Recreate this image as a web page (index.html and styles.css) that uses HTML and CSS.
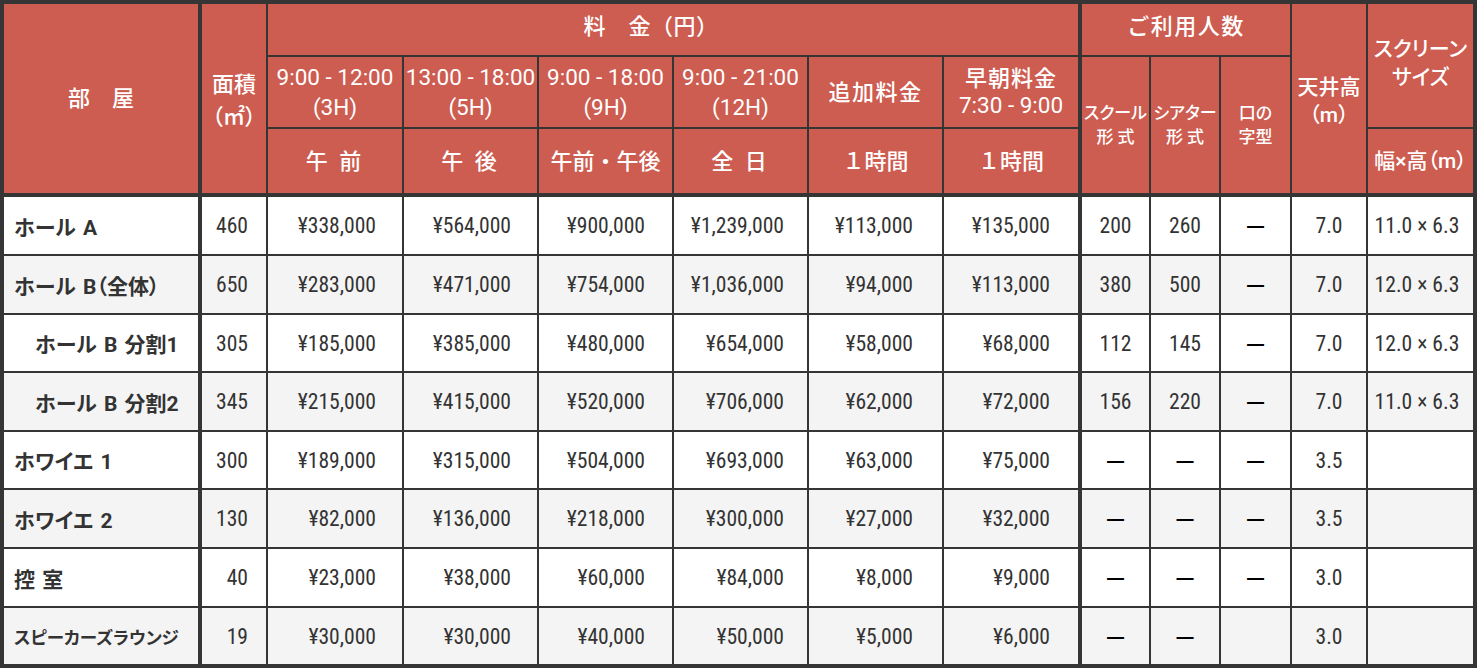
FILE: index.html
```html
<!DOCTYPE html>
<html lang="ja">
<head>
<meta charset="utf-8">
<title>料金表</title>
<link rel="stylesheet" href="styles.css">
</head>
<body>
<div class="fee" role="table">
  <div class="thead" role="rowgroup">
    <div class="th rs3 tr hb" role="columnheader">部　屋</div>
    <div class="th rs3 hb area-h pp" role="columnheader"><span>面積<br>（㎡）</span></div>
    <div class="th cs6 tr top fee-h" role="columnheader">料　金（円）</div>
    <div class="th cs3 top ls" role="columnheader">ご利用人数</div>
    <div class="th rs3 hb ceil-h pp" role="columnheader"><span>天井高<br>（m）</span></div>
    <div class="th rs2 nr screen-h pp" role="columnheader"><span>スクリーン<br>サイズ</span></div>

    <div class="th time" role="columnheader"><span>9:00 - 12:00<br>(3H)</span></div>
    <div class="th time" role="columnheader"><span>13:00 - 18:00<br>(5H)</span></div>
    <div class="th time" role="columnheader"><span>9:00 - 18:00<br>(9H)</span></div>
    <div class="th time" role="columnheader"><span>9:00 - 21:00<br>(12H)</span></div>
    <div class="th ls" role="columnheader">追加料金</div>
    <div class="th tr early" role="columnheader"><span><b class="jp">早朝料金</b><br>7:30 - 9:00</span></div>
    <div class="th rs2 hb cap pp" role="columnheader"><span>スクール<br>形 式</span></div>
    <div class="th rs2 hb cap pp" role="columnheader"><span>シアター<br>形 式</span></div>
    <div class="th rs2 hb cap pp" role="columnheader"><span>口の<br>字型</span></div>

    <div class="th hb sp" role="columnheader">午 前</div>
    <div class="th hb sp" role="columnheader">午 後</div>
    <div class="th hb" role="columnheader">午前・午後</div>
    <div class="th hb sp" role="columnheader">全 日</div>
    <div class="th hb" role="columnheader">１時間</div>
    <div class="th hb tr" role="columnheader">１時間</div>
    <div class="th hb nr wh pp" role="columnheader">幅×高（m）</div>
  </div>

  <div class="tbody" role="rowgroup">
    <div class="row" role="row">
      <div class="td name">ホール A</div><div class="td area">460</div>
      <div class="td p">¥338,000</div><div class="td p">¥564,000</div><div class="td p">¥900,000</div><div class="td p">¥1,239,000</div><div class="td p">¥113,000</div><div class="td p">¥135,000</div>
      <div class="td">200</div><div class="td">260</div><div class="td na">—</div><div class="td">7.0</div><div class="td scr">11.0 × 6.3</div>
    </div>
    <div class="row" role="row">
      <div class="td name">ホール B（全体）</div><div class="td area">650</div>
      <div class="td p">¥283,000</div><div class="td p">¥471,000</div><div class="td p">¥754,000</div><div class="td p">¥1,036,000</div><div class="td p">¥94,000</div><div class="td p">¥113,000</div>
      <div class="td">380</div><div class="td">500</div><div class="td na">—</div><div class="td">7.0</div><div class="td scr">12.0 × 6.3</div>
    </div>
    <div class="row" role="row">
      <div class="td name sub">ホール B 分割1</div><div class="td area">305</div>
      <div class="td p">¥185,000</div><div class="td p">¥385,000</div><div class="td p">¥480,000</div><div class="td p">¥654,000</div><div class="td p">¥58,000</div><div class="td p">¥68,000</div>
      <div class="td">112</div><div class="td">145</div><div class="td na">—</div><div class="td">7.0</div><div class="td scr">12.0 × 6.3</div>
    </div>
    <div class="row" role="row">
      <div class="td name sub">ホール B 分割2</div><div class="td area">345</div>
      <div class="td p">¥215,000</div><div class="td p">¥415,000</div><div class="td p">¥520,000</div><div class="td p">¥706,000</div><div class="td p">¥62,000</div><div class="td p">¥72,000</div>
      <div class="td">156</div><div class="td">220</div><div class="td na">—</div><div class="td">7.0</div><div class="td scr">11.0 × 6.3</div>
    </div>
    <div class="row" role="row">
      <div class="td name">ホワイエ 1</div><div class="td area">300</div>
      <div class="td p">¥189,000</div><div class="td p">¥315,000</div><div class="td p">¥504,000</div><div class="td p">¥693,000</div><div class="td p">¥63,000</div><div class="td p">¥75,000</div>
      <div class="td na">—</div><div class="td na">—</div><div class="td na">—</div><div class="td">3.5</div><div class="td scr"></div>
    </div>
    <div class="row" role="row">
      <div class="td name">ホワイエ 2</div><div class="td area">130</div>
      <div class="td p">¥82,000</div><div class="td p">¥136,000</div><div class="td p">¥218,000</div><div class="td p">¥300,000</div><div class="td p">¥27,000</div><div class="td p">¥32,000</div>
      <div class="td na">—</div><div class="td na">—</div><div class="td na">—</div><div class="td">3.5</div><div class="td scr"></div>
    </div>
    <div class="row" role="row">
      <div class="td name">控 室</div><div class="td area">40</div>
      <div class="td p">¥23,000</div><div class="td p">¥38,000</div><div class="td p">¥60,000</div><div class="td p">¥84,000</div><div class="td p">¥8,000</div><div class="td p">¥9,000</div>
      <div class="td na">—</div><div class="td na">—</div><div class="td na">—</div><div class="td">3.0</div><div class="td scr"></div>
    </div>
    <div class="row" role="row">
      <div class="td name small">スピーカーズラウンジ</div><div class="td area">19</div>
      <div class="td p">¥30,000</div><div class="td p">¥30,000</div><div class="td p">¥40,000</div><div class="td p">¥50,000</div><div class="td p">¥5,000</div><div class="td p">¥6,000</div>
      <div class="td na">—</div><div class="td na">—</div><div class="td"></div><div class="td">3.0</div><div class="td scr"></div>
    </div>
  </div>
</div>
</body>
</html>
```

FILE: styles.css
```css
html, body {
  margin: 0;
  padding: 0;
  background: #ffffff;
}

body {
  font-family: Roboto, "Noto Sans CJK JP", sans-serif;
}

.fee {
  display: grid;
  grid-template-columns: 198px 66px 136px 135px 135px 135px 135px 138px 69px 70px 71px 76px 105px;
  grid-template-rows: 53px 72px 68px 59px 59px 58px 59px 58px 59px 59px 56px;
  width: 1477px;
  height: 668px;
  box-sizing: border-box;
  border: 4px solid #353535;
}

.thead,
.tbody,
.row {
  display: contents;
}

.rs2 { grid-row: span 2; }
.rs3 { grid-row: span 3; }
.cs3 { grid-column: span 3; }
.cs6 { grid-column: span 6; }

.th,
.td {
  box-sizing: border-box;
  border-right: 2px solid #353535;
  border-bottom: 2px solid #353535;
  display: flex;
  align-items: center;
  justify-content: center;
  text-align: center;
  white-space: nowrap;
  overflow: hidden;
  min-width: 0;
}

/* header */
.th {
  background: #cd5c51;
  color: #ffffff;
  font-size: 22px;
  font-weight: 500;
  line-height: 27px;
}

.th.tr { border-right-width: 4px; }
.th.hb { border-bottom-width: 4px; }
.th.nr { border-right: 0; }

.th.top {
  padding-bottom: 6px;
}

.th.fee-h {
  padding-right: 44px;
  letter-spacing: 0.5px;
}

.th.ls {
  letter-spacing: 1.5px;
}

.th.time {
  font-size: 22.5px;
  font-weight: 400;
  line-height: 30px;
}

.th.early {
  font-size: 22.5px;
  font-weight: 400;
  line-height: 27px;
}

.th .jp {
  font-size: 22px;
  font-weight: 500;
  letter-spacing: 1px;
}

.th.sp {
  letter-spacing: 3px;
}

/* cells whose parentheses / kana are set proportionally */
.th.pp {
  font-feature-settings: "palt";
}

.th.area-h {
  line-height: 32px;
  padding-top: 5px;
}

.th.ceil-h {
  padding-top: 5px;
}

.th.cap {
  font-size: 17px;
  line-height: 24px;
}

.th.screen-h {
  padding-bottom: 6px;
}

.th.screen-h,
.th.ceil-h,
.th.wh {
  font-size: 21px;
  line-height: 28px;
}

/* body */
.td {
  font-family: "Roboto Condensed", Roboto, "Noto Sans CJK JP", sans-serif;
  font-size: 21.6px;
  color: #333333;
  background: #ffffff;
}

.tbody .row:nth-child(even) > .td {
  background: #f4f4f4;
}

.tbody .row > .td:nth-child(1),
.tbody .row > .td:nth-child(8) {
  border-right-width: 4px;
}

.tbody .row > .td:last-child {
  border-right: 0;
}

.tbody .row:last-child > .td {
  border-bottom: 0;
}

.td.name {
  justify-content: flex-start;
  padding-left: 10px;
  font-family: Roboto, "Noto Sans CJK JP", sans-serif;
  font-size: 21px;
  font-weight: 700;
  word-spacing: 2px;
  font-feature-settings: "palt";
}

.td.name.sub {
  padding-left: 31px;
}

.td.name.small {
  font-size: 17.5px;
  font-weight: 700;
}

.td.area {
  justify-content: flex-end;
  padding-right: 18px;
}

.td.p {
  justify-content: flex-end;
}

.row > .td:nth-child(3) { padding-right: 26px; }
.row > .td:nth-child(4) { padding-right: 26px; }
.row > .td:nth-child(5) { padding-right: 27px; }
.row > .td:nth-child(6) { padding-right: 23px; }
.row > .td:nth-child(7) { padding-right: 29px; }
.row > .td:nth-child(8) { padding-right: 28px; }

.td.na {
  font-family: "Noto Sans CJK JP", sans-serif;
  color: #000000;
  font-size: 21px;
  font-weight: 700;
  padding-bottom: 3px;
}

.td.scr {
  padding-right: 7px;
}
```
